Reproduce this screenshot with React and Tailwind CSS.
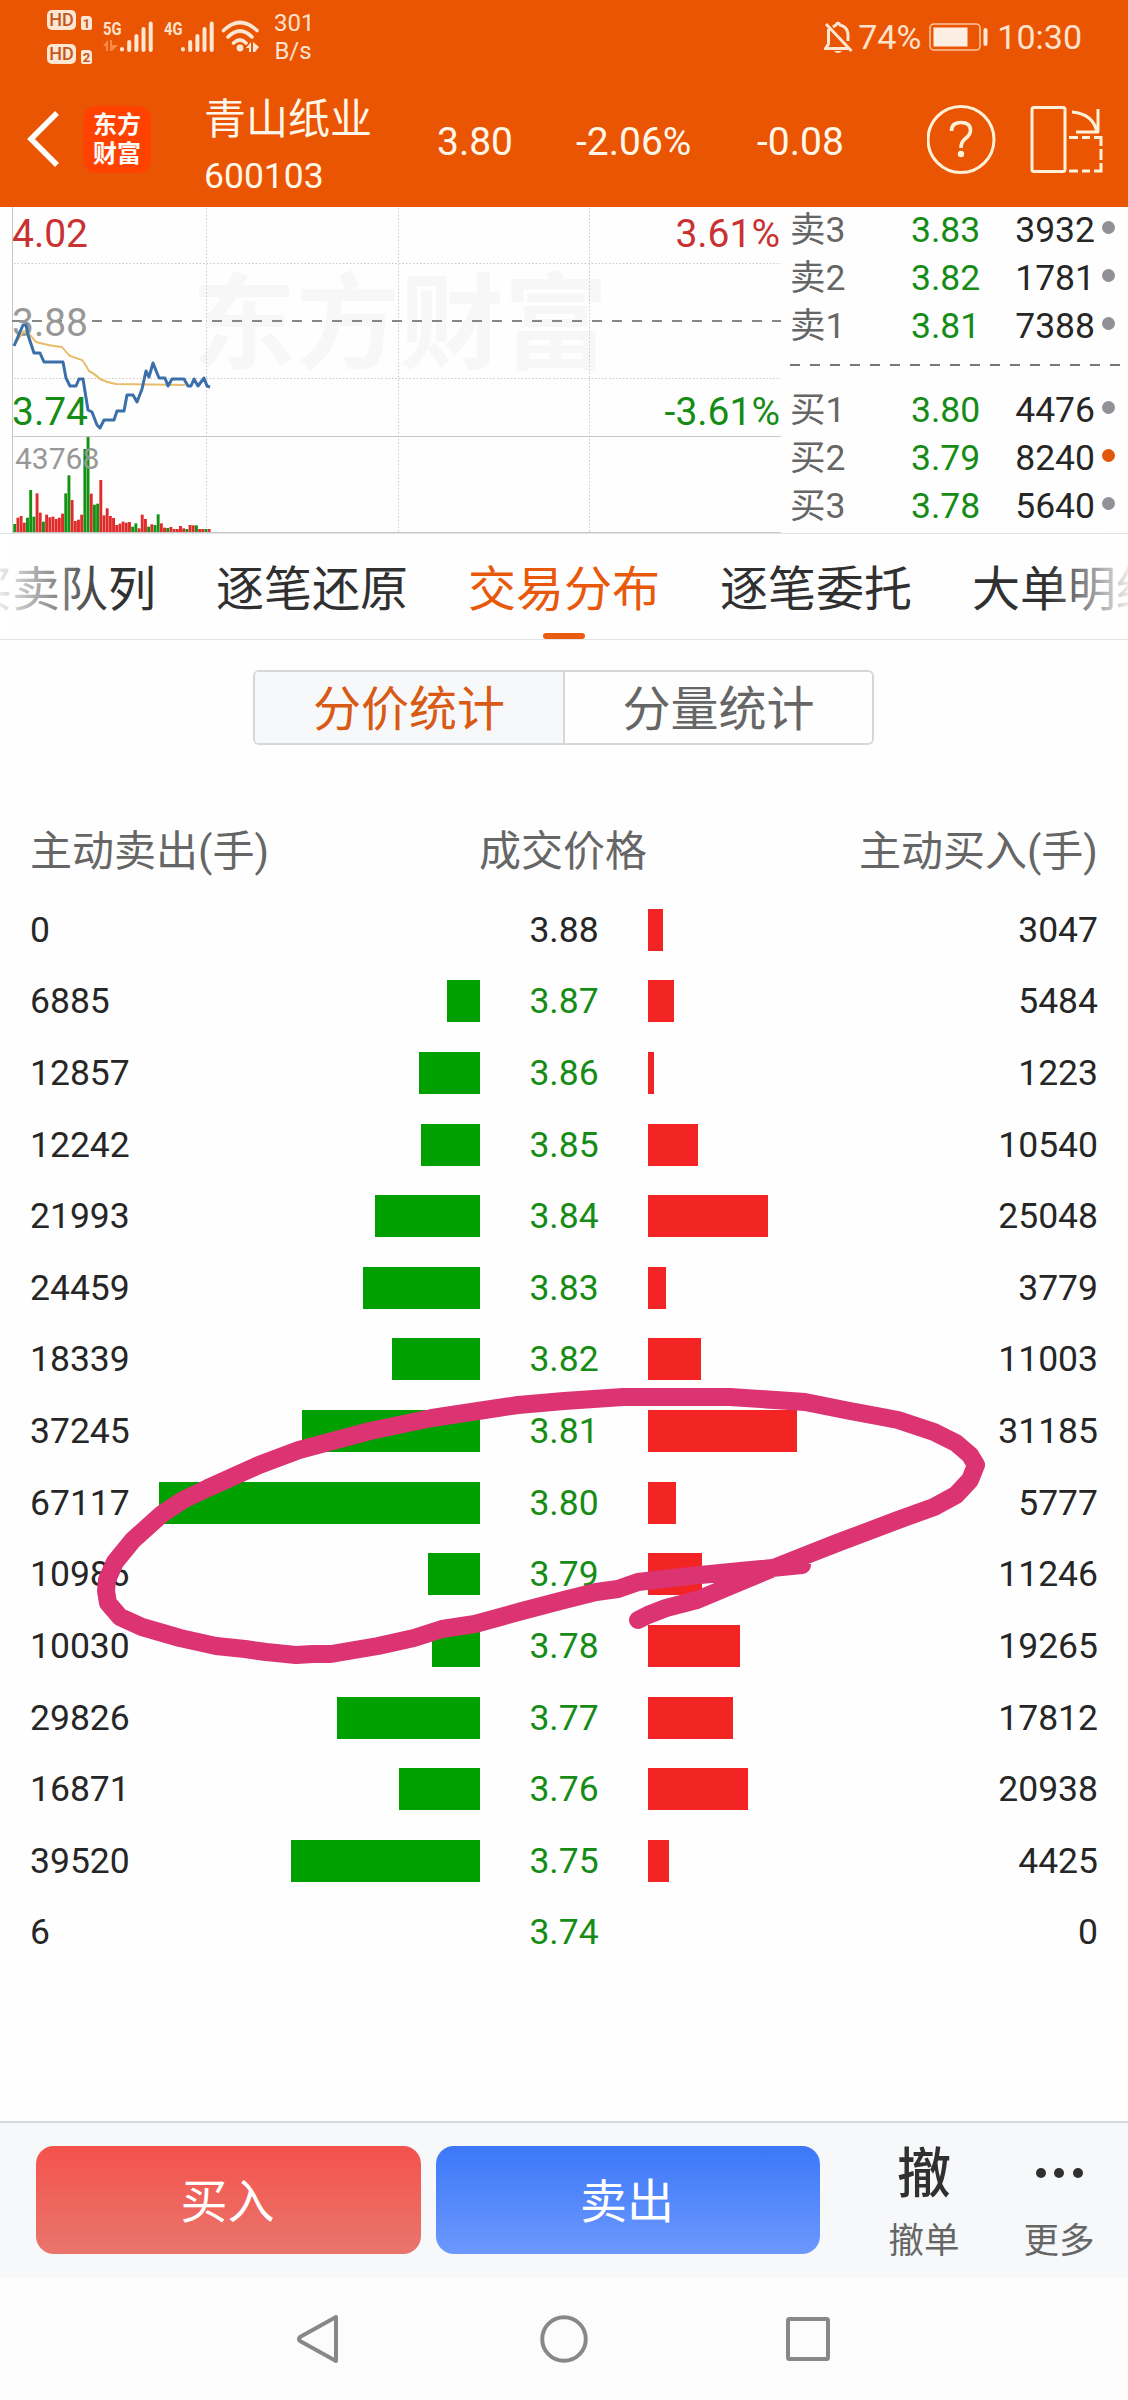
const rows = [
  [0, "3.88", 3047], [6885, "3.87", 5484], [12857, "3.86", 1223], [12242, "3.85", 10540],
  [21993, "3.84", 25048], [24459, "3.83", 3779], [18339, "3.82", 11003], [37245, "3.81", 31185],
  [67117, "3.80", 5777], [10986, "3.79", 11246], [10030, "3.78", 19265], [29826, "3.77", 17812],
  [16871, "3.76", 20938], [39520, "3.75", 4425], [6, "3.74", 0],
];

const asks = [["卖3", "3.83", "3932"], ["卖2", "3.82", "1781"], ["卖1", "3.81", "7388"]];
const bids = [["买1", "3.80", "4476"], ["买2", "3.79", "8240", true], ["买3", "3.78", "5640"]];

// Minute volumes: direction letter and bar height in thirds of a pixel.
const volumes =
  "g24 r43 r48 r28 g43 g126 g46 r116 r58 g31 r52 r44 r46 r39 r43 r55 g116 g170 r96 r33 r37 r52 g249 g285 r115 g82 g85 r156 r50 r71 r48 r42 r21 r25 r31 r28 r30 g16 g26 r11 r52 r39 g16 r23 g21 g53 r26 r13 g12 r15 r9 r9 r18 r11 g9 r21 r20 g20 r9 r9 g9 r9"
    .split(" ")
    .map((v) => [v[0], Number(v.slice(1)) / 3]);

function Signal() {
  return (
    <svg className="h-[31px] w-[33px]" viewBox="0 0 33 31" stroke="#fde6d2" strokeWidth="4" strokeLinecap="round">
      <path d="M2 28.500V28M9.200 29V21M16.400 29V15M23.500 29V8M30.700 29V2.500" />
    </svg>
  );
}

function HdBadge({ n }) {
  return (
    <div className="flex h-[21px] items-end gap-[5px]">
      <span className="flex h-5 w-[29px] items-center justify-center rounded-[5px] bg-[#fde6d2] text-[18px] leading-none font-medium text-[#c2581c]">HD</span>
      <span className="flex h-[14px] w-[11px] items-center justify-center rounded-[2px] rounded-tr-[4px] bg-[#fde6d2] text-[13px] leading-none font-bold text-[#c2581c]">{n}</span>
    </div>
  );
}

function StatusBar() {
  return (
    <div className="flex h-[76px] items-start text-[#fde3cd]">
      <div className="ml-[47px] flex w-[46px] flex-col gap-[13px] pt-[9px]">
        <HdBadge n="1" />
        <HdBadge n="2" />
      </div>
      <div className="ml-[10px] flex w-[17px] flex-col pt-[20px]">
        <span className="origin-left scale-x-[.82] text-[18px] leading-[17px] font-bold">5G</span>
        <svg className="mt-[3px] h-[11px] w-[15px]" viewBox="0 0 15 11" fill="#ff8a48"><path d="M0 6L5 0V11H3V6ZM7 0H9V5L15 5L9 11H7Z" /></svg>
      </div>
      <div className="pt-[21px]"><Signal /></div>
      <div className="ml-[11px] w-[17px] pt-[20px]">
        <span className="block origin-left scale-x-[.82] text-[18px] leading-[17px] font-bold">4G</span>
      </div>
      <div className="pt-[21px]"><Signal /></div>
      <svg className="mt-[20px] ml-[7px] h-[33px] w-[39px]" viewBox="0 0 39 33" fill="none" stroke="#fde6d2" strokeWidth="3.600" strokeLinecap="round">
        <path d="M2.500 10.500Q19 -5.500 36 10.500M7 17Q19 5 31 17M12.500 23Q19 17 25 23" />
        <circle cx="19" cy="28" r="3.400" fill="#fde6d2" stroke="none" />
        <path d="M25 28L30 22V32H28V28ZM32 22L38 27L34 32H32Z" fill="#fde6d2" stroke="none" />
      </svg>
      <div className="ml-[14px] w-[38px] pt-[9px] text-center text-[24px] leading-[28px]">301<br />B/s</div>
      <div className="mt-[21px] mr-[46px] ml-auto flex h-[32px] items-center text-[34px] leading-none">
        <svg className="mr-[5px] h-[33px] w-[29px]" viewBox="0 0 29 33" fill="none" stroke="#fde6d2" strokeWidth="3">
          <path d="M2 3L27.500 30M4.500 8V23L1.500 27.500H24M9 6Q11 4.500 12 4Q14 0 16 4Q23.500 6 24 13V20" />
          <path d="M10 30H18Q14 34 10 30" fill="#fde6d2" stroke="none" />
        </svg>
        <span>74%</span>
        <svg className="ml-[8px] h-[28px] w-[60px]" viewBox="0 0 60 28" fill="none">
          <rect x="1" y="1" width="50" height="26" rx="4" stroke="#fbc49c" strokeWidth="1.600" />
          <rect x="4.500" y="4.500" width="34" height="19" fill="#fdeee4" />
          <path d="M56.500 7V21" stroke="#fde6d2" strokeWidth="4" strokeLinecap="round" />
        </svg>
        <span className="ml-[8px]">10:30</span>
      </div>
    </div>
  );
}

function TitleBar() {
  return (
    <div className="flex h-[131px] items-start text-[#fff8ea]">
      <svg className="mt-[34px] ml-[26px] h-[58px] w-[34px]" viewBox="0 0 34 58" fill="none" stroke="#fff" strokeWidth="5.500"><path d="M31 3L5 29L31 55" /></svg>
      <div className="mt-[30px] ml-[23px] flex h-[67px] w-[68px] flex-col items-center justify-center rounded-[13px] bg-[#ff4200] text-[24px] leading-[29px] font-bold text-white">
        <span>东方</span>
        <span>财富</span>
      </div>
      <div className="ml-[53px] w-[170px]">
        <div className="mt-[15px] h-[58px] text-[42px] leading-[58px] whitespace-nowrap">青山纸业</div>
        <div className="mt-[6px] text-[35.500px] leading-[42px]">600103</div>
      </div>
      <div className="mt-[43px] flex text-[39px] leading-[46px]">
        <span className="ml-[63px] w-[139px]">3.80</span>
        <span className="w-[181px]">-2.06%</span>
        <span className="w-[170px]">-0.08</span>
      </div>
      <svg className="mt-[28px] h-[72px] w-[70px]" viewBox="0 0 70 72" fill="none" stroke="#fff1d8" strokeWidth="3">
        <ellipse cx="34" cy="35.500" rx="33" ry="33" />
        <path d="M24.500 27Q24.500 18.500 34 18.500Q43.500 18.500 43.500 26.500Q43.500 30.500 38.500 34.500Q34 38 34 44" strokeWidth="3.600" />
        <circle cx="34" cy="50" r="3.200" fill="#fff1d8" stroke="none" />
      </svg>
      <svg className="mt-[28px] ml-[31px] h-[72px] w-[76px]" viewBox="0 0 76 72" fill="none" stroke="#fff1d8" strokeWidth="3">
        <rect x="4" y="3.500" width="33" height="64" rx="2" />
        <path d="M44 8Q66 10 69 29M70 5V28M48 28H71" />
        <path d="M41 33.500H50M54 33.500H62M66 33.500H73V42M73 45V56M73 59V67H66M62 67H54M50 67H41" />
      </svg>
    </div>
  );
}

function MiniChart() {
  return (
    <svg className="h-[326px] w-[784px] shrink-0" viewBox="0 207 784 326" fill="none" fontFamily="Roboto, 'Noto Sans CJK SC', sans-serif" fontSize="39">
      <text x="192" y="361" fontFamily="'Noto Sans CJK SC', sans-serif" fontWeight="700" fontSize="104" fill="#f7f7f7">东方财富</text>
      <g stroke="#c9c9c9" strokeWidth="1" strokeDasharray="1.500 2">
        <path d="M14 263.500H781M14 378.500H781M206.500 208V532M398.500 208V532M589.500 208V532" />
      </g>
      <path d="M12.500 207V532M12 436.500H781M12 532.500H781" stroke="#c8c8c8" />
      <path d="M12 321H781" stroke="#868686" strokeWidth="2" strokeDasharray="10 10" />
      <text x="12" y="247" fill="#c83232">4.02</text>
      <text x="12" y="336" fill="#989898">3.88</text>
      <text x="12" y="425" fill="#168c16">3.74</text>
      <text x="780" y="247" fill="#c83232" textAnchor="end">3.61%</text>
      <text x="780" y="425" fill="#168c16" textAnchor="end">-3.61%</text>
      <path d="M15 344L24 331Q29 333 36 342Q50 346 62 347Q66 352 70 356Q76 358 82 360Q86 365 89 371Q95 374 100 379Q108 383 116 384L185 385" stroke="#e6bd6a" strokeWidth="2" />
      <path d="M14 346L23 325H26L28 335L34 353H40L44 362H63L66 378L70 386H76L79 379H83L88 410L92 412L97 425L100 428L104 420H114L117 411H124L127 395H133L137 402L142 389L146 371L149 377L153 363L159 378H165L168 386L172 379H184L188 386H191L194 379L198 386L204 378L207 386L210 387" stroke="#3a6fa9" strokeWidth="3" strokeLinejoin="round" />
      {volumes.map(([c, h], i) => (
        <rect key={i} x={13.300 + i * 3.187} y={532 - h} width="2.900" height={h} fill={c === "g" ? "#139213" : "#e02b2b"} />
      ))}
      <text x="15" y="469" fontSize="30" fill="#989898">43768</text>
    </svg>
  );
}

function QuoteRow({ row }) {
  const [label, price, qty, hot] = row;
  return (
    <div className="flex h-12 items-center text-[35.500px] leading-[48px]">
      <span className="w-[121px] text-[#666]">{label}</span>
      <span className="w-[92px] text-[#168c16]">{price}</span>
      <span className="w-[92px] text-right text-[#262626]">{qty}</span>
      <span className={hot ? "mb-[5px] ml-[7px] h-[13px] w-[13px] rounded-full bg-[#e0560a]" : "mb-[5px] ml-[7px] h-[13px] w-[13px] rounded-full bg-[#909096]"} />
    </div>
  );
}

function OrderBook() {
  return (
    <div className="flex-1 pl-[6px]">
      <div className="mt-[-1px]">{asks.map((r) => <QuoteRow key={r[0]} row={r} />)}</div>
      <svg className="mt-[14px] h-[2px] w-[332px]" viewBox="0 0 332 2"><path d="M0 1H332" stroke="#777" strokeWidth="2" strokeDasharray="10 10" /></svg>
      <div className="mt-[20px]">{bids.map((r) => <QuoteRow key={r[0]} row={r} />)}</div>
    </div>
  );
}

function Tabs() {
  return (
    <div className="relative flex h-[106px] shrink-0 justify-center gap-[60px] overflow-hidden border-b border-[#e4e4e4] text-[48px] leading-[111px] whitespace-nowrap text-[#303030]">
      <span>买卖队列</span>
      <span>逐笔还原</span>
      <span className="text-[#e8590c]">交易分布</span>
      <span>逐笔委托</span>
      <span>大单明细</span>
      <span className="absolute inset-y-0 left-0 w-[108px] bg-linear-to-r from-white/90 to-white/0" />
      <span className="absolute inset-y-0 right-0 w-[80px] bg-linear-to-l from-white/90 to-white/0" />
      <span className="absolute bottom-0 left-[543px] h-[6px] w-[42px] rounded-[3px] bg-[#ea5b12]" />
    </div>
  );
}

function Distribution() {
  return (
    <div className="relative h-[1300px] shrink-0">
      <div className="flex h-[72px] items-center justify-between pr-[30px] pl-[30px] text-[42px] leading-[72px] text-[#666]">
        <span className="w-[300px] pt-[3px]">主动卖出(手)</span>
        <span className="pt-[3px] pr-[2px]">成交价格</span>
        <span className="w-[300px] pt-[3px] text-right">主动买入(手)</span>
      </div>
      <div className="mt-[8px]">
        {rows.map(([sell, price, buy], i) => (
          <div key={price} className="flex h-[71.620px] items-center text-[35.500px] leading-[42px] text-[#262626]">
            <div className="flex w-[480px] items-center justify-between pl-[30px]">
              <span>{sell}</span>
              <span className="h-[42px] bg-[#00a000]" style={{ width: sell < 10 ? 0 : sell * 0.00478 }} />
            </div>
            <span className={i === 0 ? "w-[168px] text-center" : "w-[168px] text-center text-[#168c16]"}>{price}</span>
            <div className="flex w-[450px] items-center justify-between">
              <span className="h-[42px] bg-[#f32424]" style={{ width: buy * 0.00478 }} />
              <span>{buy}</span>
            </div>
          </div>
        ))}
      </div>
      <svg className="pointer-events-none absolute top-[569px] left-0 h-[300px] w-[1128px]" viewBox="0 1383 1128 300" fill="none" stroke="#dc3373" strokeWidth="18" strokeLinecap="round" strokeLinejoin="round">
        <path d="M638 1620L648 1615L666 1608L697 1600L740 1582L776 1567L837 1543L898 1520L934 1507L956 1495L970 1480L976 1465L970 1455L956 1443L934 1432L898 1420L877 1416L850 1411L805 1402L730 1397H623L564 1401L518 1405L478 1411L432 1418L370 1431L299 1450L259 1465L208 1488L183 1500L162 1514L133 1540L115 1562L107 1580L106 1591L108 1603L120 1617L142 1627L180 1638L216 1646L245 1649L266 1652L296 1655L313 1654H331L378 1646L414 1638L442 1629L475 1624L522 1611L564 1600L596 1592L618 1589L638 1582L690 1576L751 1570L802 1565" />
      </svg>
    </div>
  );
}

function ActionBar() {
  return (
    <div className="flex h-[157px] shrink-0 border-t-2 border-[#d8dbde] bg-[#f7f8fa] pt-[23px] pl-[36px]">
      <div className="flex h-[108px] w-[385px] items-center justify-center rounded-[18px] bg-linear-to-b from-[#f4514b] to-[#e9756d] pt-[2px] pr-[2px] text-[47px] leading-none text-white">买入</div>
      <div className="ml-[15px] flex h-[108px] w-[384px] items-center justify-center rounded-[18px] bg-linear-to-b from-[#3b78f8] to-[#6c98fd] pt-[2px] pr-[2px] text-[47px] leading-none text-white">卖出</div>
      <div className="ml-[54px] flex w-[100px] flex-col items-center pt-[2px] text-[#303030]">
        <span className="h-[67px] text-[54px] leading-[54px] font-medium">撤</span>
        <span className="text-[35.500px] leading-[52px] text-[#666]">撤单</span>
      </div>
      <div className="ml-[35px] flex w-[100px] flex-col items-center pt-[2px]">
        <span className="flex h-[67px] gap-[8.500px] pt-[20px]">
          <i className="h-[10px] w-[10px] rounded-full bg-[#303030]" />
          <i className="h-[10px] w-[10px] rounded-full bg-[#303030]" />
          <i className="h-[10px] w-[10px] rounded-full bg-[#303030]" />
        </span>
        <span className="text-[35.500px] leading-[52px] text-[#666]">更多</span>
      </div>
    </div>
  );
}

function SystemNav() {
  return (
    <div className="flex h-[122px] shrink-0 items-center bg-[#fcfcfc]">
      <svg className="ml-[295px] h-[52px] w-[48px]" viewBox="0 0 48 52" fill="none" stroke="#888" strokeWidth="4" strokeLinejoin="round"><path d="M41 4V48L5 28Q3 26 5 24Z" /></svg>
      <svg className="ml-[195px] h-[52px] w-[52px]" viewBox="0 0 52 52" fill="none" stroke="#888" strokeWidth="4"><circle cx="26" cy="26" r="21.800" /></svg>
      <svg className="ml-[192px] h-[52px] w-[52px]" viewBox="0 0 52 52" fill="none" stroke="#888" strokeWidth="4"><rect x="6" y="6" width="40" height="40" rx="1.500" /></svg>
    </div>
  );
}

export default function App() {
  return (
    <div className="flex h-[2400px] w-[1128px] flex-col overflow-hidden bg-[#fefefe] font-[Roboto,'Noto_Sans_CJK_SC',sans-serif]">
      <header className="h-[207px] shrink-0 bg-[#ea5504]">
        <StatusBar />
        <TitleBar />
      </header>
      <section className="flex h-[327px] shrink-0 border-b border-[#e2e2e2]">
        <MiniChart />
        <OrderBook />
      </section>
      <Tabs />
      <div className="mt-[30px] mb-[69px] ml-[253px] flex h-[75px] w-[621px] shrink-0 overflow-hidden rounded-[6px] border-2 border-[#d5d8db] text-center text-[48px] leading-[75px]">
        <div className="w-[310px] border-r-2 border-[#d5d8db] bg-[#f7f8fa] text-[#d85a14]">分价统计</div>
        <div className="flex-1 text-[#666]">分量统计</div>
      </div>
      <Distribution />
      <div className="flex-1" />
      <ActionBar />
      <SystemNav />
    </div>
  );
}
